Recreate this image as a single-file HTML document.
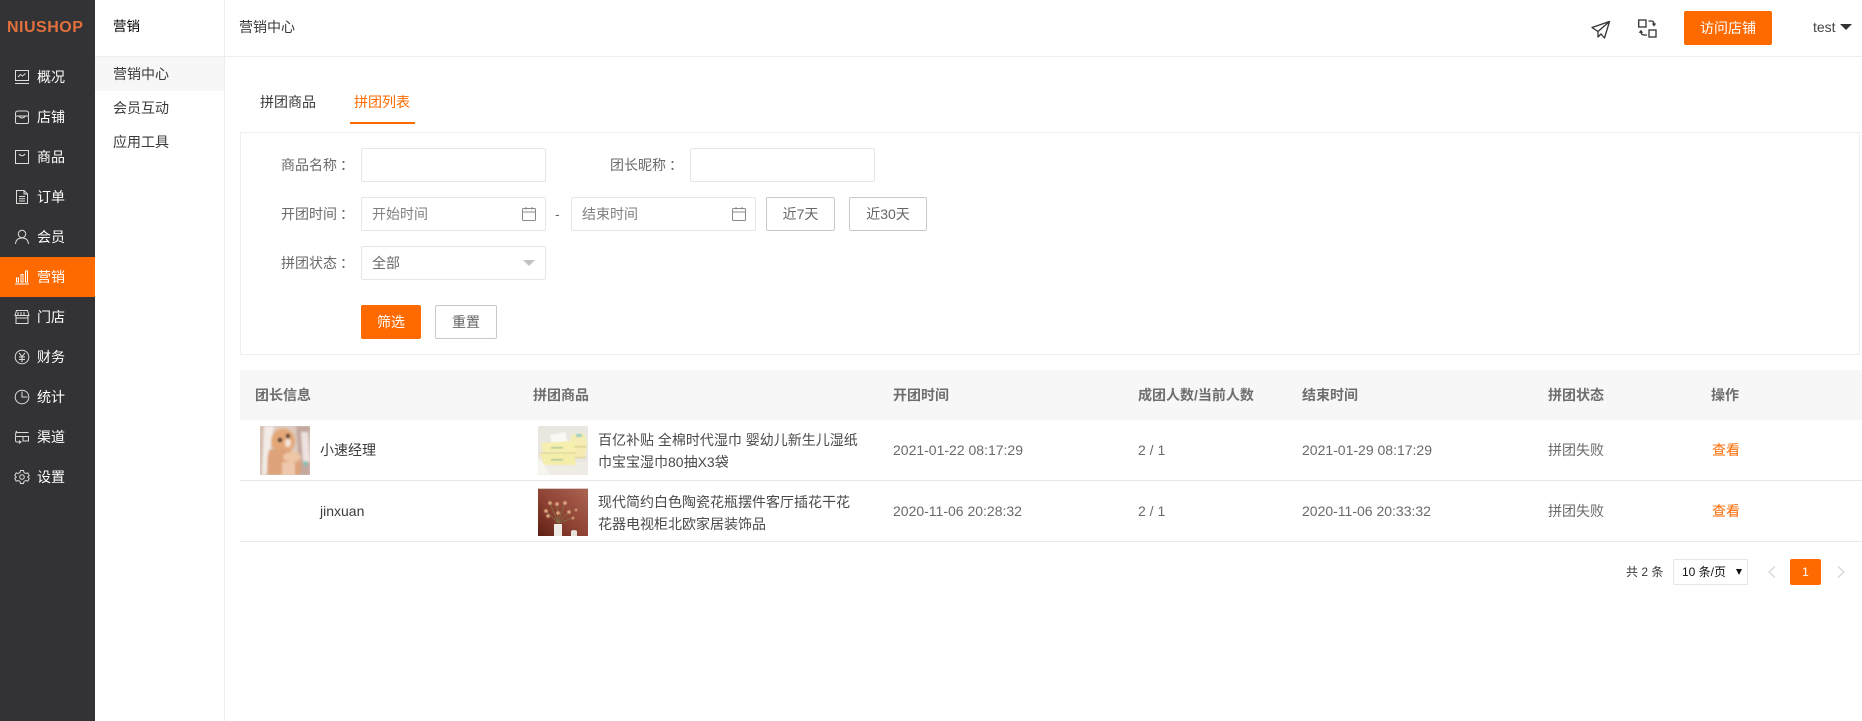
<!DOCTYPE html>
<html lang="zh"><head><meta charset="utf-8"><title>拼团列表</title>
<style>
*{box-sizing:border-box;margin:0;padding:0}
html,body{width:1862px;height:721px;overflow:hidden;background:#fff}
body{position:relative;font-family:"Liberation Sans","Noto Sans CJK SC",sans-serif;font-size:14px;color:#3a3a3a}
.t{position:absolute;line-height:20px;height:20px;white-space:nowrap}
.b{position:absolute}
.side{position:absolute;left:0;top:0;width:95px;height:721px;background:#333335}
.side .t{left:37px;color:#fff}
.side svg{position:absolute;left:14px;width:16px;height:16px;fill:none;stroke:#dcdcdc;stroke-width:1}
.inp{position:absolute;height:34px;border:1px solid #e6e6e6;border-radius:2px;background:#fff}
.btn{position:absolute;height:34px;border:1px solid #c9c9c9;border-radius:2px;background:#fff;text-align:center;line-height:32px;color:#666}
.g{color:#6a6a6a}
.th{font-weight:bold;color:#6e6e6e}
.or{color:#ff6a00}
</style></head><body>

<div class="side">
<div class="t" style="left:7px;top:18px;color:#e2703c;font-size:16px;font-weight:bold;letter-spacing:.5px;line-height:20px">NIUSHOP</div>
<div class="b" style="left:0;top:257px;width:95px;height:40px;background:#ff6a00"></div>

<svg style="top:69px" viewBox="0 0 16 16"><rect x="1.500" y="1.500" width="13" height="10"/><path d="M1 14.500h14M4 8l2.500-2.500 2 1.500 3-2.500"/></svg><div class="t" style="top:67px">概况</div>
<svg style="top:109px" viewBox="0 0 16 16"><rect x="1.500" y="7" width="13" height="7.500" rx="1.500"/><path d="M1.500 7V4.500Q1.500 2 4 2h8q2.500 0 2.500 2.500V7M5 7.500q3 3 6 0"/></svg><div class="t" style="top:107px">店铺</div>
<svg style="top:149px" viewBox="0 0 16 16"><rect x="1.500" y="1.500" width="13" height="13"/><path d="M5 5q3 3.500 6 0"/></svg><div class="t" style="top:147px">商品</div>
<svg style="top:189px" viewBox="0 0 16 16"><path d="M2.500 1.500h7.500l3.500 3.500v9.500h-11zM10 1.500V5h3.500M5 7.500h6M5 9.800h6M5 12h6"/></svg><div class="t" style="top:187px">订单</div>
<svg style="top:229px" viewBox="0 0 16 16"><circle cx="8" cy="5" r="3.700"/><path d="M1.500 15q.5-6 6.500-6t6.500 6"/></svg><div class="t" style="top:227px">会员</div>
<svg style="top:269px;stroke:#fff" viewBox="0 0 16 16"><path d="M1 15h14M2.500 13V9h2v4zM7 13V5.500h2V13zM11.500 13V2h2v11z"/></svg><div class="t" style="top:267px">营销</div>
<svg style="top:309px" viewBox="0 0 16 16"><path d="M2.500 1.500h11l1.500 5H1zM2 7v7.500h12V7M1.500 9h13M4 3v3M7 3v3M10 3v3"/></svg><div class="t" style="top:307px">门店</div>
<svg style="top:349px" viewBox="0 0 16 16"><circle cx="8" cy="8" r="6.800"/><path d="M5 4l3 3.500L11 4M5 8h6M5 10.500h6M8 7.500V13"/></svg><div class="t" style="top:347px">财务</div>
<svg style="top:389px" viewBox="0 0 16 16"><circle cx="8" cy="8" r="6.800"/><path d="M8 2.500V8h5.500"/></svg><div class="t" style="top:387px">统计</div>
<svg style="top:429px" viewBox="0 0 16 16"><path d="M14.500 3.500H3.500Q1.500 3.500 1.500 6v1.500M3 2L1.500 3.500M1.500 8v3.500q0 1.500 2 1.500H7M9 7.500h5.500v4.500H9zM9 7.500H1.500M5 11.500l2 1.500-2 1.500"/></svg><div class="t" style="top:427px">渠道</div>
<svg style="top:469px" viewBox="0 0 16 16"><path d="M6.500 1.500h3l.5 2 1.800 1 2-.6 1.400 2.600-1.500 1.500 1.500 1.500-1.400 2.600-2-.6-1.800 1-.5 2h-3l-.5-2-1.800-1-2 .6-1.400-2.600L2.300 8 .8 6.500l1.400-2.600 2 .6 1.800-1z"/><circle cx="8" cy="8" r="2.300"/></svg><div class="t" style="top:467px">设置</div>
</div>

<div class="b" style="left:224px;top:0;width:1px;height:721px;background:#eeeeee"></div>
<div class="b" style="left:95px;top:56px;width:1767px;height:1px;background:#eeeeee"></div>
<div class="b" style="left:95px;top:57px;width:129px;height:34px;background:#f7f7f7"></div>
<div class="t" style="left:113px;top:17px;color:#000;font-size:13.500px">营销</div>
<div class="t" style="left:113px;top:64px">营销中心</div>
<div class="t" style="left:113px;top:98px">会员互动</div>
<div class="t" style="left:113px;top:132px">应用工具</div>
<div class="t" style="left:239px;top:17px">营销中心</div>

<svg class="b" style="left:1590px;top:18px;width:22px;height:22px" viewBox="0 0 22 22" fill="none" stroke="#333" stroke-width="1.300" stroke-linejoin="round"><path d="M19.500 3.500L2 9.500l6 4L8 19l3-3 3.500 4zM19.500 3.500L8 13.500"/></svg>
<svg class="b" style="left:1638px;top:18px;width:20px;height:20px" viewBox="0 0 20 20" fill="none" stroke="#333" stroke-width="1.300"><rect x=".7" y="2" width="7.300" height="7"/><rect x="11" y="12" width="7" height="7"/><path d="M10.500 3H13q3 0 3 3"/><path d="M13.800 5.500h4.500l-2.300 3z" fill="#333" stroke="none"/><path d="M9 17H6q-3 0-3-3"/><path d="M.7 14.800h4.500l-2.300-3z" fill="#333" stroke="none"/></svg>
<div class="b" style="left:1684px;top:11px;width:88px;height:34px;background:#ff6a00;border-radius:2px;color:#fff;text-align:center;line-height:34px">访问店铺</div>
<div class="t" style="left:1813px;top:17px;color:#444">test</div>
<div class="b" style="left:1840px;top:24px;width:0;height:0;border-left:6px solid transparent;border-right:6px solid transparent;border-top:6px solid #333"></div>

<div class="t" style="left:260px;top:92px">拼团商品</div>
<div class="t or" style="left:354px;top:92px">拼团列表</div>
<div class="b" style="left:350px;top:122px;width:65px;height:2px;background:#ff6a00"></div>

<div class="b" style="left:240px;top:132px;width:1620px;height:223px;border:1px solid #eeeeee"></div>

<div class="t g" style="left:281px;top:155px">商品名称</div><div class="t g" style="left:340px;top:155px">：</div>
<div class="inp" style="left:361px;top:148px;width:185px"></div>
<div class="t g" style="left:610px;top:155px">团长昵称</div><div class="t g" style="left:669px;top:155px">：</div>
<div class="inp" style="left:690px;top:148px;width:185px"></div>

<div class="t g" style="left:281px;top:204px">开团时间</div><div class="t g" style="left:340px;top:204px">：</div>
<div class="inp" style="left:361px;top:197px;width:185px"></div>
<div class="t" style="left:372px;top:204px;color:#808080">开始时间</div>
<svg class="b" style="left:521px;top:206px;width:16px;height:16px" viewBox="0 0 16 16" fill="none" stroke="#888" stroke-width="1"><rect x="1.500" y="2.500" width="13" height="12" rx="1"/><path d="M1.500 6h13M5 1v2.500M11 1v2.500"/></svg>
<div class="t g" style="left:555px;top:204px">-</div>
<div class="inp" style="left:571px;top:197px;width:185px"></div>
<div class="t" style="left:582px;top:204px;color:#808080">结束时间</div>
<svg class="b" style="left:731px;top:206px;width:16px;height:16px" viewBox="0 0 16 16" fill="none" stroke="#888" stroke-width="1"><rect x="1.500" y="2.500" width="13" height="12" rx="1"/><path d="M1.500 6h13M5 1v2.500M11 1v2.500"/></svg>
<div class="btn" style="left:766px;top:197px;width:69px">近7天</div>
<div class="btn" style="left:849px;top:197px;width:78px">近30天</div>

<div class="t g" style="left:281px;top:253px">拼团状态</div><div class="t g" style="left:340px;top:253px">：</div>
<div class="inp" style="left:361px;top:246px;width:185px"></div>
<div class="t g" style="left:372px;top:253px">全部</div>
<div class="b" style="left:523px;top:260px;width:0;height:0;border-left:6px solid transparent;border-right:6px solid transparent;border-top:6px solid #c2c2c2"></div>

<div class="b" style="left:361px;top:305px;width:60px;height:34px;background:#ff6a00;border-radius:2px;color:#fff;text-align:center;line-height:34px">筛选</div>
<div class="btn" style="left:435px;top:305px;width:62px">重置</div>

<div class="b" style="left:240px;top:370px;width:1622px;height:50px;background:#f7f7f7"></div>
<div class="t th" style="left:255px;top:385px">团长信息</div>
<div class="t th" style="left:533px;top:385px">拼团商品</div>
<div class="t th" style="left:893px;top:385px">开团时间</div>
<div class="t th" style="left:1138px;top:385px">成团人数/当前人数</div>
<div class="t th" style="left:1302px;top:385px">结束时间</div>
<div class="t th" style="left:1548px;top:385px">拼团状态</div>
<div class="t th" style="left:1711px;top:385px">操作</div>

<svg class="b" style="left:260px;top:426px;width:50px;height:49px" viewBox="0 0 50 49"><defs><filter id="f" x="-10%" y="-10%" width="120%" height="120%"><feGaussianBlur stdDeviation="1"/></filter><filter id="s" x="-10%" y="-10%" width="120%" height="120%"><feGaussianBlur stdDeviation=".5"/></filter><clipPath id="c1"><rect width="50" height="49"/></clipPath></defs><g clip-path="url(#c1)"><rect width="50" height="49" fill="#ddcbbf"/><g filter="url(#f)"><path d="M0 0h7l5 22-4 27H0z" fill="#d4bdb0"/><path d="M4 0h10L12 12 10 28 6 49H2z" fill="#f2ebe6"/><path d="M36 0h14v49H40z" fill="#c3a79e"/><path d="M41 6h7l2 30h-7z" fill="#eee2e0"/><ellipse cx="23" cy="15" rx="12" ry="12.500" fill="#e4a878"/><path d="M9 24q-3 12-1 25h32q3-12-2-20-10-8-29-5z" fill="#dda27a"/><ellipse cx="32" cy="31" rx="9" ry="5" fill="#efc6a6"/><rect x="22" y="36" width="13" height="13" fill="#eec7ac"/><circle cx="20" cy="14" r="2.300" fill="#2e2420"/><circle cx="28" cy="10" r="2.200" fill="#2e2420"/><ellipse cx="28" cy="17" rx="3" ry="4" fill="#f4e4da"/><rect x="44" y="35" width="3" height="5" fill="#6fc6b8"/></g></g></svg>
<div class="t" style="left:320px;top:440px">小速经理</div>
<svg class="b" style="left:538px;top:426px;width:50px;height:49px" viewBox="0 0 50 49"><defs><clipPath id="c2"><rect width="50" height="49"/></clipPath></defs><g clip-path="url(#c2)"><rect width="50" height="49" fill="#eae7e0"/><g filter="url(#s)"><path d="M0 36h50v13H0z" fill="#efece5"/><path d="M0 32l4 3 8 14H0z" fill="#f7f5f0"/><path d="M33 9l13-2 3 9-2 16H34z" fill="#f4ecb2"/><path d="M33 20h15v1.500H33zM34 31h14v1H34z" fill="#d8cf8c"/><path d="M12 9l15-3 3 11-16 1z" fill="#f9f8f2"/><path d="M3 17l32-2 3 11H5z" fill="#f6efae"/><path d="M2 27l34-1 2 13H6z" fill="#f5edaa"/><path d="M2 26.500h36v1H2z" fill="#d9d08c"/><rect x="13" y="21" width="12" height="1.500" fill="#a4c698"/><rect x="13" y="33" width="12" height="1.500" fill="#a4c698"/><rect x="38" y="8" width="6" height="3" fill="#9dd0c0"/></g></g></svg>
<div class="t" style="left:598px;top:430px;color:#4a4a4a">百亿补贴 全棉时代湿巾 婴幼儿新生儿湿纸</div>
<div class="t" style="left:598px;top:452px;color:#4a4a4a">巾宝宝湿巾80抽X3袋</div>
<div class="t g" style="left:893px;top:440px">2021-01-22 08:17:29</div>
<div class="t g" style="left:1138px;top:440px">2 / 1</div>
<div class="t g" style="left:1302px;top:440px">2021-01-29 08:17:29</div>
<div class="t g" style="left:1548px;top:440px">拼团失败</div>
<div class="t or" style="left:1712px;top:440px">查看</div>
<div class="b" style="left:240px;top:480px;width:1622px;height:1px;background:#e6e6e6"></div>

<div class="t" style="left:320px;top:501px">jinxuan</div>
<svg class="b" style="left:538px;top:488px;width:50px;height:48px" viewBox="0 0 50 48"><defs><linearGradient id="lg" x1="1" y1="0" x2="0" y2="1"><stop offset="0" stop-color="#ad6453"/><stop offset=".6" stop-color="#8a3f30"/><stop offset="1" stop-color="#5c1f14"/></linearGradient><clipPath id="c3"><rect width="50" height="48"/></clipPath></defs><g clip-path="url(#c3)"><rect width="50" height="48" fill="url(#lg)"/><rect width="50" height="1" fill="#d9c9c4"/><path d="M12 15l8 20M19 16l1 19M27 15l-7 20M8 23l12 12M31 24l-11 11M35 30l-15 5" stroke="#7d7248" stroke-width=".8" fill="none"/><g filter="url(#s)" fill="#e3ab84"><circle cx="12" cy="15" r="1.800"/><circle cx="19" cy="16" r="1.800"/><circle cx="27" cy="15" r="1.800"/><circle cx="8" cy="23" r="1.800"/><circle cx="10" cy="28" r="1.800"/><circle cx="20" cy="25" r="1.800"/><circle cx="31" cy="24" r="1.800"/><circle cx="35" cy="30" r="1.300"/><circle cx="38" cy="22" r="1.300"/></g><path d="M16 36h8v12h-8z" fill="#efece6"/><path d="M33 43q3-2 6 0v5h-6z" fill="#e8e2dc"/></g></svg>
<div class="t" style="left:598px;top:492px;color:#4a4a4a">现代简约白色陶瓷花瓶摆件客厅插花干花</div>
<div class="t" style="left:598px;top:514px;color:#4a4a4a">花器电视柜北欧家居装饰品</div>
<div class="t g" style="left:893px;top:501px">2020-11-06 20:28:32</div>
<div class="t g" style="left:1138px;top:501px">2 / 1</div>
<div class="t g" style="left:1302px;top:501px">2020-11-06 20:33:32</div>
<div class="t g" style="left:1548px;top:501px">拼团失败</div>
<div class="t or" style="left:1712px;top:501px">查看</div>
<div class="b" style="left:240px;top:541px;width:1622px;height:1px;background:#e9e9e9"></div>

<div class="t" style="left:1626px;top:562px;font-size:12px;color:#3a3a3a">共 2 条</div>
<div class="b" style="left:1673px;top:559px;width:75px;height:26px;border:1px solid #e6e6e6;border-radius:2px"></div>
<div class="t" style="left:1682px;top:562px;font-size:12px;color:#111">10 条/页</div>
<div class="b" style="left:1736px;top:569px;width:0;height:0;border-left:3.500px solid transparent;border-right:3.500px solid transparent;border-top:6px solid #111"></div>
<svg class="b" style="left:1766px;top:565px;width:12px;height:14px" viewBox="0 0 12 14" fill="none" stroke="#d6d6d6" stroke-width="1.300"><path d="M9 1.500L3 7l6 5.500"/></svg>
<div class="b" style="left:1790px;top:559px;width:31px;height:26px;background:#ff6a00;border-radius:2px;color:#fff;text-align:center;line-height:26px;font-size:12px">1</div>
<svg class="b" style="left:1835px;top:565px;width:12px;height:14px" viewBox="0 0 12 14" fill="none" stroke="#d6d6d6" stroke-width="1.300"><path d="M3 1.500L9 7l-6 5.500"/></svg>

</body></html>
